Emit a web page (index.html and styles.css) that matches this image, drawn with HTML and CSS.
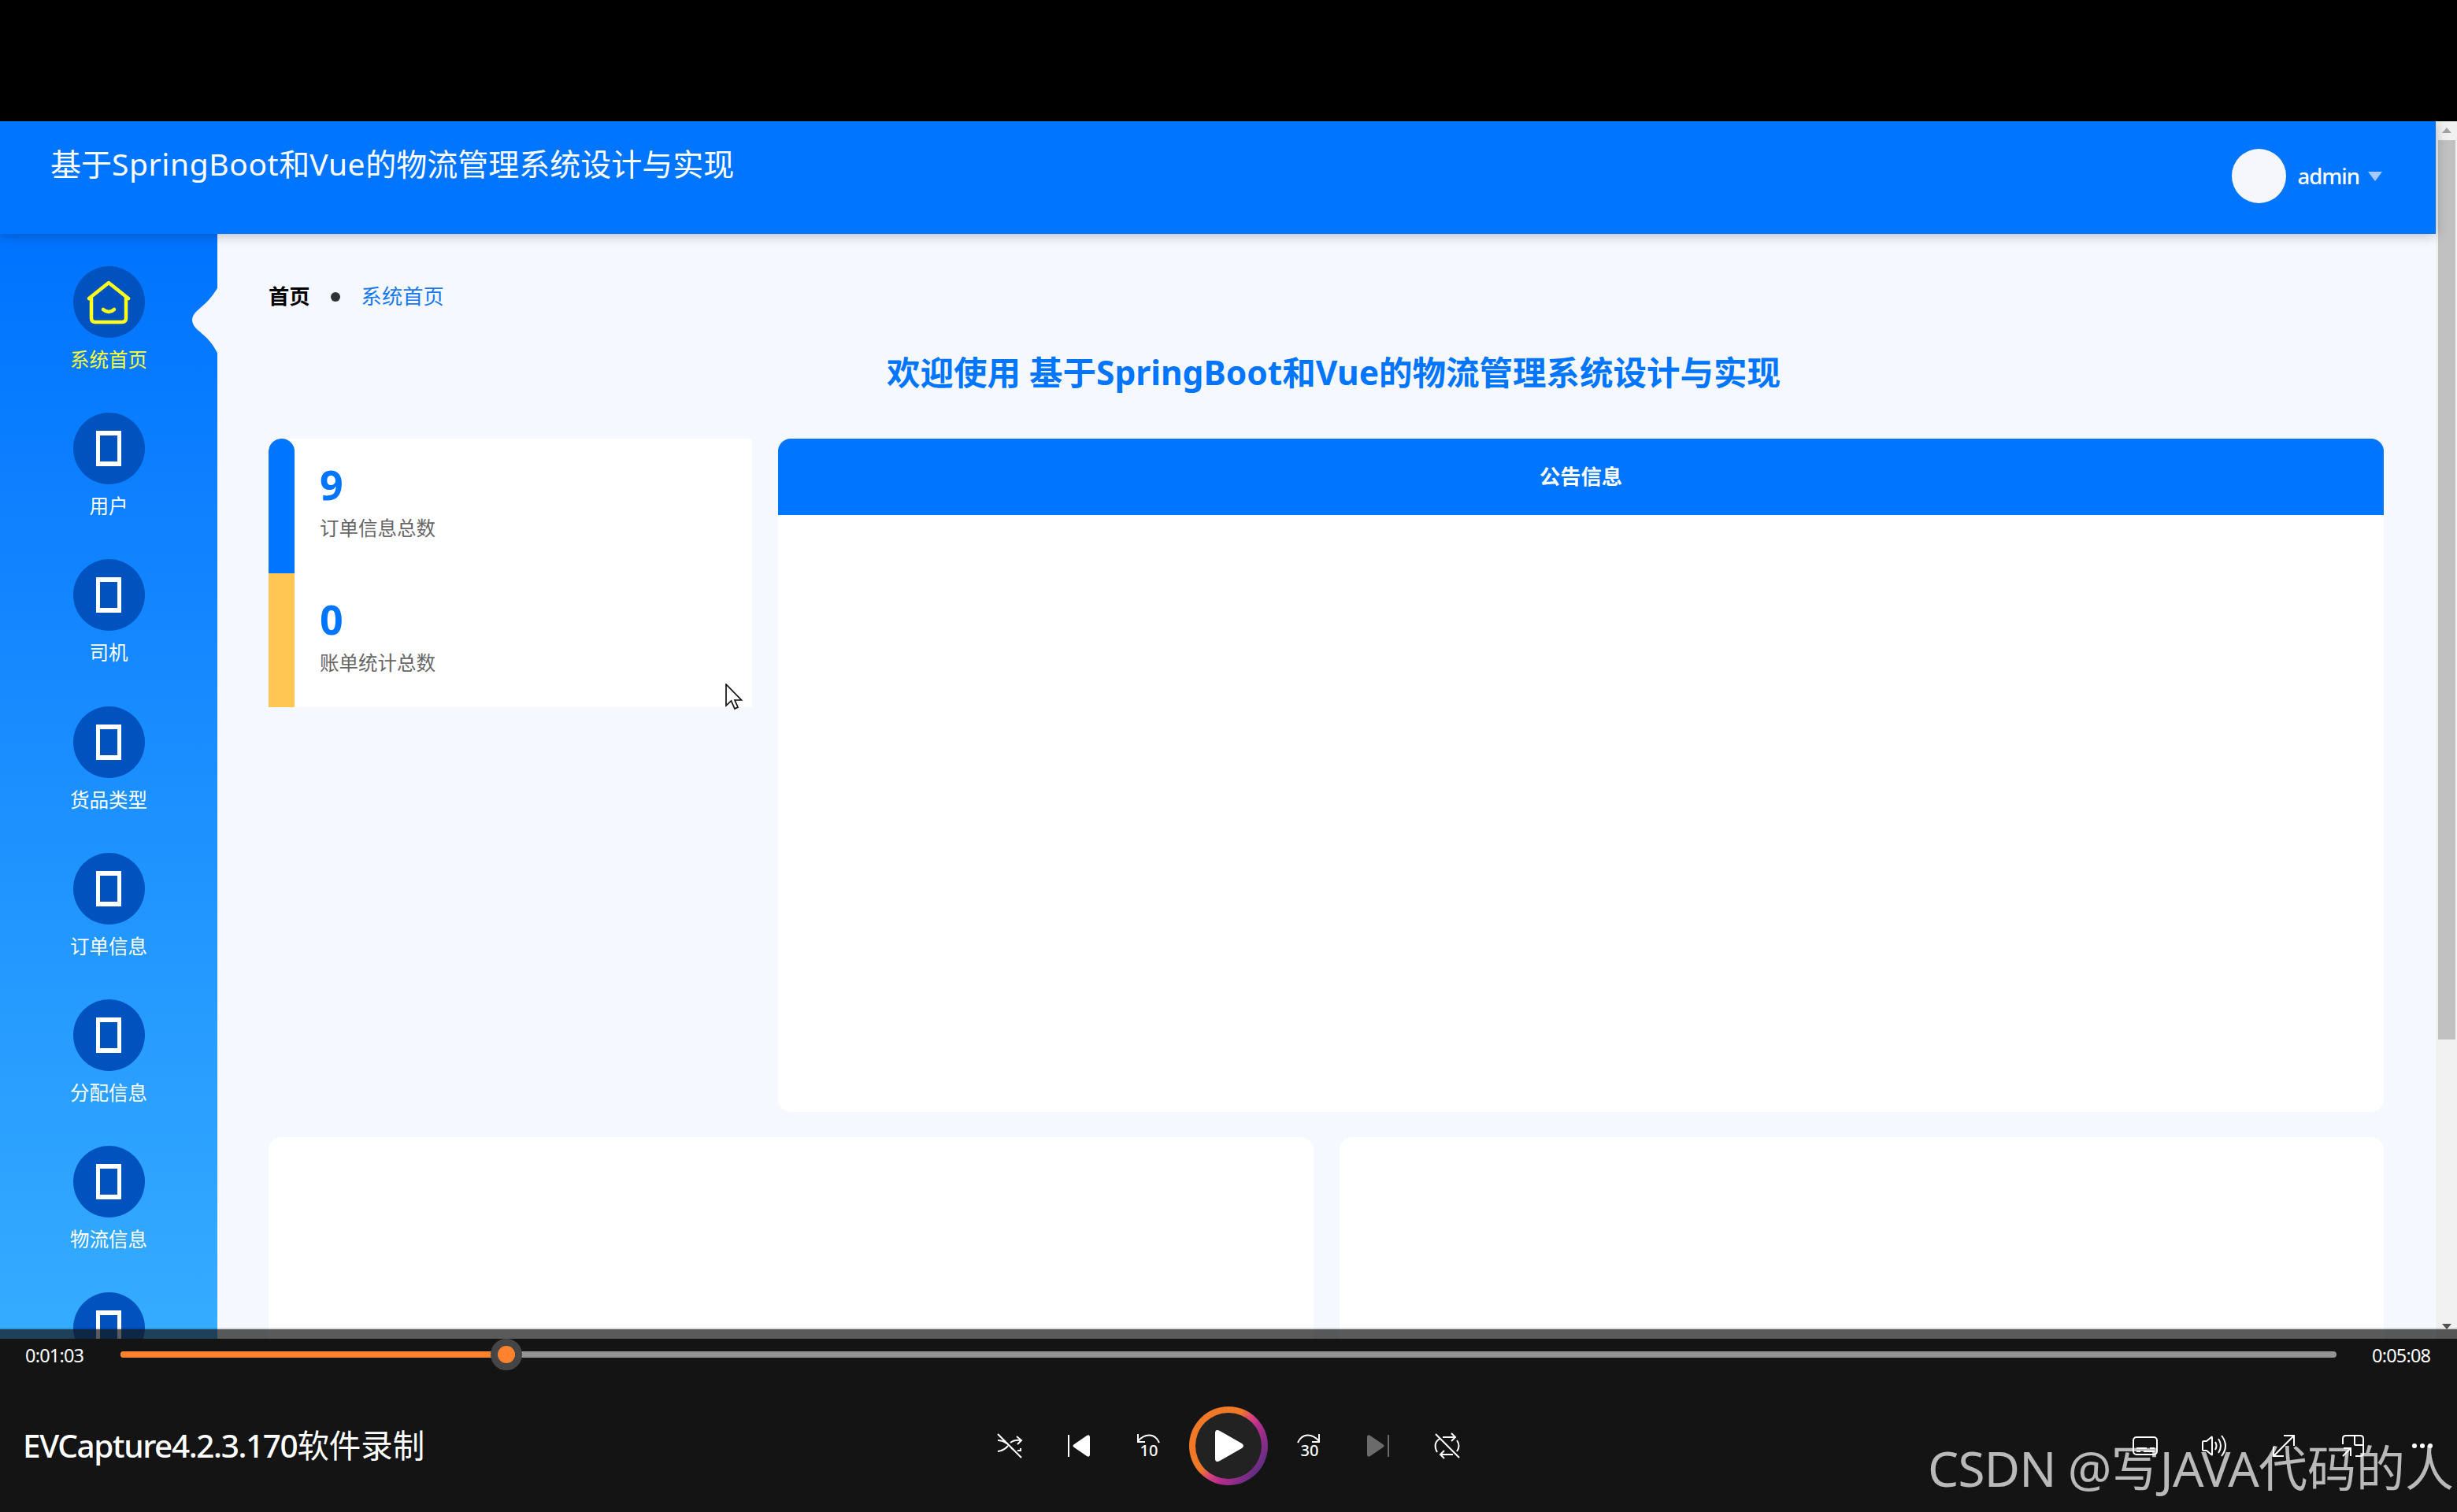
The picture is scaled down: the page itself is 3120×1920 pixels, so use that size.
FILE: index.html
```html
<!DOCTYPE html>
<html lang="zh-CN">
<head>
    <meta charset="UTF-8">
    <title>基于SpringBoot和Vue的物流管理系统设计与实现</title>
    <link rel="stylesheet" href="styles.css">
</head>
<body>

<div class="screen">
    <div class="app">
        <div class="page">
            <header class="header">
                <div class="header-title">基于<span class="en">SpringBoot</span>和<span class="en">Vue</span>的物流管理系统设计与实现</div>
                <div class="user">
                    <div class="avatar"></div>
                    <span class="user-name">admin</span>
                    <i class="caret"></i>
                </div>
            </header>

            <div class="body">
                <nav class="sidebar">
                    <svg class="notch" viewBox="0 0 34 86"><path d="M34 0C25 16 17 22 8 30Q-6 42 8 55C18 63 26 70 34 86Z" fill="#f5f9ff"/></svg>
                    <div class="menu-item active">
                        <div class="menu-icon">
                            <svg width="56" height="56" viewBox="0 0 56 56" fill="none" stroke="#ffff1a" stroke-width="4.500" stroke-linecap="round" stroke-linejoin="round">
                                <path d="M6 23V48Q6 53 11 53H45Q50 53 50 48V23"/>
                                <path d="M3 23L28 3L53 23"/>
                                <path d="M21 37Q28 43 35 37"/>
                            </svg>
                        </div>
                        <span>系统首页</span>
                    </div>
                    <div class="menu-item"><div class="menu-icon"><i class="box"></i></div><span>用户</span></div>
                    <div class="menu-item"><div class="menu-icon"><i class="box"></i></div><span>司机</span></div>
                    <div class="menu-item"><div class="menu-icon"><i class="box"></i></div><span>货品类型</span></div>
                    <div class="menu-item"><div class="menu-icon"><i class="box"></i></div><span>订单信息</span></div>
                    <div class="menu-item"><div class="menu-icon"><i class="box"></i></div><span>分配信息</span></div>
                    <div class="menu-item"><div class="menu-icon"><i class="box"></i></div><span>物流信息</span></div>
                    <div class="menu-item"><div class="menu-icon"><i class="box"></i></div></div>
                </nav>

                <main class="main">
                    <div class="breadcrumb">
                        <b>首页</b>
                        <i class="dot"></i>
                        <span>系统首页</span>
                    </div>
                    <h1 class="welcome">欢迎使用 基于<span class="en">SpringBoot</span>和<span class="en">Vue</span>的物流管理系统设计与实现</h1>

                    <div class="row">
                        <div class="stats">
                            <div class="stat">
                                <div class="stat-num">9</div>
                                <div class="stat-label">订单信息总数</div>
                            </div>
                            <div class="stat yellow">
                                <div class="stat-num">0</div>
                                <div class="stat-label">账单统计总数</div>
                            </div>
                        </div>
                        <div class="notice">
                            <div class="notice-title">公告信息</div>
                        </div>
                    </div>

                    <div class="row charts">
                        <div class="chart"></div>
                        <div class="chart"></div>
                    </div>
                </main>
            </div>
        </div>

        <div class="scrollbar">
            <i class="arrow-up"></i>
            <div class="thumb"></div>
            <i class="arrow-down"></i>
        </div>
    </div>

    <!-- 鼠标指针 -->
    <svg class="cursor" viewBox="0 0 22 34"><path d="M1 1V28L7.500 22L12 32L16 30L12 21H20.500Z" fill="#fff" stroke="#111" stroke-width="1.700"/></svg>

    <!-- 播放器控制栏 -->
    <div class="player">
        <div class="progress">
            <span class="time">0:01:03</span>
            <div class="track">
                <div class="played"></div>
                <div class="handle"></div>
            </div>
            <span class="time end">0:05:08</span>
        </div>
        <div class="controls">
            <div class="video-name"><span class="en">EVCapture4.2.3.170</span>软件录制</div>
            <div class="buttons">
                <div class="btn">
                    <svg width="34" height="34" viewBox="0 0 34 34">
                        <path d="M2 2L32 32M2 10Q10 10 17 17Q20 21 22 22M2 24Q10 23 15 17M18 13Q23 9 31 10M26 5L32 10L27 15M27 23L32 23M31 20V24"/>
                    </svg>
                </div>
                <div class="btn">
                    <svg width="28" height="28" viewBox="0 0 28 28">
                        <path d="M1 0V28"/>
                        <path class="solid" d="M8 12L24 1Q28-1 28 3V25Q28 29 24 27L8 16Q5 14 8 12Z"/>
                    </svg>
                </div>
                <div class="btn skip">
                    <svg width="30" height="12" viewBox="0 0 30 12"><path d="M2 0V10H11M2 9Q9 1 17 1.500Q25 2 29 11"/></svg>
                    <span>10</span>
                </div>
                <div class="btn play">
                    <div class="play-inner">
                        <svg width="36" height="40" viewBox="0 0 36 40"><path class="solid" d="M0 4Q0-2 6 1L34 17Q38 20 34 23L6 39Q0 42 0 36Z"/></svg>
                    </div>
                </div>
                <div class="btn skip">
                    <svg width="30" height="12" viewBox="0 0 30 12"><path d="M28 0V10H19M28 9Q21 1 13 1.500Q5 2 1 11"/></svg>
                    <span>30</span>
                </div>
                <div class="btn disabled">
                    <svg width="28" height="28" viewBox="0 0 28 28">
                        <path d="M27 0V28"/>
                        <path class="solid" d="M20 12L4 1Q0-1 0 3V25Q0 29 4 27L20 16Q23 14 20 12Z"/>
                    </svg>
                </div>
                <div class="btn">
                    <svg width="34" height="34" viewBox="0 0 34 34">
                        <path d="M2 2L32 32M11 6H27M22 1L27 6L22 11M7 8Q-2 14 4 25M24 28H8M13 23L8 28L13 33M29 10Q34 17 29 24"/>
                    </svg>
                </div>
            </div>
            <div class="tools">
                <div class="btn">
                    <svg width="32" height="26" viewBox="0 0 32 26"><rect x="1" y="2" width="30" height="22" rx="4"/><path d="M5 16H18M22 16H28M5 20H10M14 20H28"/></svg>
                </div>
                <div class="btn">
                    <svg width="34" height="30" viewBox="0 0 34 30"><path d="M2 10Q2 9 4 9H7L13 4Q14 3 14 5V26Q14 27 13 26L7 21H4Q2 21 2 20ZM18 10Q21 15 18 20M22 6Q28 15 22 24M26 2Q36 15 26 28"/></svg>
                </div>
                <div class="btn">
                    <svg width="28" height="28" viewBox="0 0 28 28"><path d="M14 1H27V14M27 1L1 27M1 15V27H14"/></svg>
                </div>
                <div class="btn">
                    <svg width="28" height="28" viewBox="0 0 28 28"><path d="M1 12V5Q1 1 5 1H23Q27 1 27 5V23Q27 27 23 27H17M16 1V12Q16 13 17 13H27M1 27L11 17M2 17H11V27"/></svg>
                </div>
                <div class="btn dots"><i></i><i></i><i></i></div>
            </div>
        </div>
    </div>

    <div class="watermark"><span class="en">CSDN @</span>写<span class="en">JAVA</span>代码的人</div>
</div>

</body>
</html>
```
FILE: styles.css
```css
* {
    box-sizing: border-box;
}

body {
    margin: 0;
    background-color: #000;
    font-family: "Noto Sans", "Noto Sans CJK SC", sans-serif;
}

.screen {
    position: relative;
    width: 3120px;
    height: 1920px;
    padding-top: 154px;
    overflow: hidden;
}

.app {
    display: flex;
    height: 1547px;
    overflow: hidden;
}

.page {
    flex: 1;
    display: flex;
    flex-direction: column;
    background-color: #f5f9ff;
}

/* 顶部 */
.header {
    position: relative;
    z-index: 1;
    display: flex;
    justify-content: space-between;
    height: 143px;
    flex-shrink: 0;
    padding: 0 68px 0 64px;
    background-color: #0075ff;
    box-shadow: 0 2px 14px rgba(0, 0, 0, 0.25);
    color: #fff;
}

.header-title {
    height: 108px;
    line-height: 108px;
    font-size: 39px;
}

.header-title .en {
    letter-spacing: 0.6px;
}

.user {
    display: flex;
    align-items: center;
    height: 139px;
}

.avatar {
    width: 69px;
    height: 69px;
    border-radius: 50%;
    background-color: #f5f7fd;
}

.user-name {
    margin-left: 15px;
    font-size: 27.5px;
    font-weight: 500;
    letter-spacing: -1px;
}

.caret {
    margin-left: 11px;
    border: 9px solid transparent;
    border-top: 12px solid #a6caff;
    border-bottom: 0;
}

.body {
    flex: 1;
    display: flex;
}

/* 左侧菜单 */
.sidebar {
    position: relative;
    width: 276px;
    padding-top: 41px;
    background: linear-gradient(#0073ff, #3bb2ff);
}

.notch {
    position: absolute;
    top: 67px;
    right: -1px;
    width: 34px;
    height: 86px;
}

.menu-item {
    display: flex;
    flex-direction: column;
    align-items: center;
    height: 186.2px;
    color: #fff;
    font-size: 24.5px;
    line-height: 36px;
}

.menu-item.active {
    color: #ffff33;
}

.menu-icon {
    display: flex;
    justify-content: center;
    align-items: center;
    width: 91px;
    height: 91px;
    margin-bottom: 10px;
    border-radius: 50%;
    background-color: #0053bf;
}

.box {
    width: 32px;
    height: 45px;
    border: 5.5px solid #fff;
    border-width: 6px 5px;
}

/* 内容 */
.main {
    flex: 1;
    padding: 0 66px 0 65px;
}

.breadcrumb {
    display: flex;
    align-items: center;
    height: 40px;
    margin-top: 57px;
    font-size: 26.3px;
    color: #1677ee;
}

.breadcrumb b {
    color: #000;
}

.dot {
    width: 12px;
    height: 12px;
    margin: 5px 27px 0 26px;
    border-radius: 50%;
    background-color: #303133;
}

.welcome {
    margin: 46px 0 51px;
    padding-left: 19px;
    color: #0075ff;
    font-size: 42.5px;
    line-height: 66px;
    text-align: center;
}

.row {
    display: flex;
    align-items: flex-start;
    gap: 33px;
}

.stats {
    width: 614px;
    background-color: #fff;
    border-radius: 16px 0 0 0;
    overflow: hidden;
}

.stat {
    position: relative;
    height: 170.5px;
    padding: 22px 0 0 65px;
}

.stat::before {
    content: '';
    position: absolute;
    left: 0;
    top: 0;
    width: 33px;
    height: 100%;
    border-radius: 16px 16px 0 0;
    background-color: #0075ff;
}

.stat.yellow::before {
    border-radius: 0;
    background-color: #ffc654;
}

.stat-num {
    color: #0075ff;
    font-size: 52px;
    font-weight: bold;
    line-height: 72px;
}

.stat-label {
    margin-top: 1px;
    color: #666;
    font-size: 24.5px;
    line-height: 38px;
}

.notice {
    flex: 1;
    height: 855px;
    background-color: #fff;
    border-radius: 16px;
    overflow: hidden;
}

.notice-title {
    height: 97px;
    background-color: #0075ff;
    color: #fff;
    font-size: 26.3px;
    font-weight: bold;
    line-height: 97px;
    text-align: center;
}

.charts {
    margin-top: 32px;
}

.chart {
    flex: 1;
    height: 400px;
    background-color: #fff;
    border-radius: 16px;
}

/* 滚动条 */
.scrollbar {
    display: flex;
    flex-direction: column;
    align-items: center;
    width: 27px;
    height: 1547px;
    padding-bottom: 13px;
    background-color: #f1f1f1;
}

.arrow-up {
    margin-top: 8px;
    border: 6px solid transparent;
    border-bottom: 7px solid #a3a3a3;
    border-top: 0;
}

.thumb {
    width: 22px;
    height: 1142px;
    margin-top: 9px;
    background-color: #c1c1c1;
}

.arrow-down {
    margin-top: auto;
    border: 6px solid transparent;
    border-top: 7px solid #505050;
    border-bottom: 0;
}

.cursor {
    position: absolute;
    left: 921px;
    top: 868px;
    width: 22px;
    height: 34px;
}

/* 播放器 */
.player {
    position: absolute;
    left: 0;
    right: 0;
    bottom: 0;
    height: 234px;
    padding-top: 15px;
    background: linear-gradient(rgba(0, 0, 0, 0.12) 2px, rgba(20, 20, 20, 0.7) 2px, rgba(20, 20, 20, 0.7) 14px, #141414 14px);
    color: #fff;
}

.progress {
    display: flex;
    align-items: center;
    height: 38px;
}

.time {
    width: 153px;
    padding: 2px 0 0 32px;
    font-size: 23.5px;
    letter-spacing: -0.8px;
}

.time.end {
    padding-left: 45px;
}

.track {
    position: relative;
    flex: 1;
    height: 8px;
    border-radius: 4px;
    background-color: #949494;
}

.played {
    width: 490px;
    height: 8px;
    border-radius: 4px;
    background-color: #ff822e;
}

.handle {
    position: absolute;
    left: 470px;
    top: -16px;
    width: 40px;
    height: 40px;
    border: 9px solid #454545;
    border-radius: 50%;
    background-color: #ff822e;
}

.controls {
    display: grid;
    grid-template-columns: 1fr auto 1fr;
    align-items: center;
    height: 194px;
}

.video-name {
    padding: 0 0 6px 29px;
    font-size: 40.5px;
}

.video-name .en {
    font-weight: 500;
    letter-spacing: -1.4px;
}

.buttons,
.tools {
    display: flex;
    align-items: center;
}

.tools {
    justify-content: flex-end;
}

.btn {
    display: flex;
    justify-content: center;
    align-items: center;
    width: 88px;
}

.btn svg {
    fill: none;
    stroke: #fff;
    stroke-width: 2;
    overflow: visible;
}

.btn svg .solid {
    fill: #fff;
    stroke: none;
}

.btn.disabled svg {
    opacity: 0.37;
}

.skip {
    flex-direction: column;
}

.skip span {
    height: 18px;
    padding-left: 2px;
    font-size: 20px;
    font-weight: 500;
    line-height: 18px;
}

.play {
    width: 116px;
}

.play-inner {
    display: flex;
    justify-content: center;
    align-items: center;
    width: 100px;
    height: 100px;
    padding-left: 2px;
    border: 8px solid transparent;
    border-radius: 50%;
    background: linear-gradient(#222, #222) padding-box,
        linear-gradient(125deg, #f07826 42%, #d9437c 52%, #b42d8c 62%, #652d84 85%) border-box;
}

.dots {
    gap: 4px;
}

.dots i {
    width: 6px;
    height: 6px;
    border-radius: 50%;
    background-color: #fff;
}

.watermark {
    position: absolute;
    right: 4px;
    bottom: 11px;
    color: rgba(255, 255, 255, 0.7);
    font-size: 62px;
    line-height: 90px;
    white-space: nowrap;
}

.watermark .en {
    letter-spacing: -0.8px;
}
```
